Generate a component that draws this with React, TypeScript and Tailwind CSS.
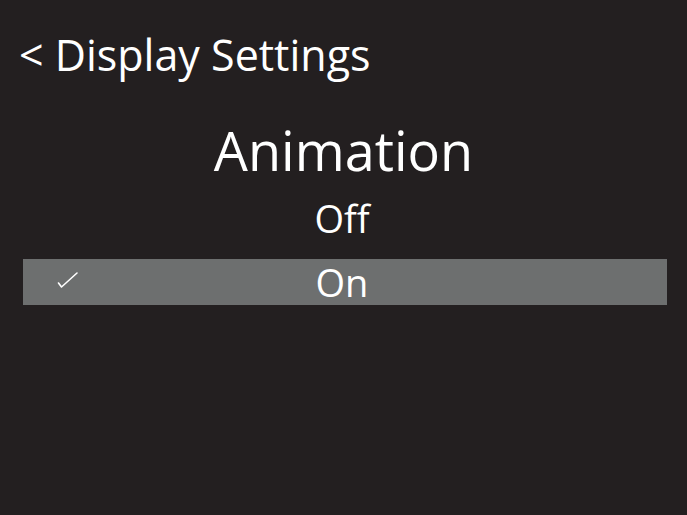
export default function App() {
  return (
    <div
      className="w-[687px] h-[515px] bg-[#231f20] text-white overflow-hidden"
      style={{ fontFamily: '"Open Sans", "Noto Sans", sans-serif' }}
    >
      {/* HEADER */}
      <div className="pl-[19px] pt-[26px] text-[43px] leading-[58px]">&lt; Display Settings</div>

      {/* TITLE */}
      <div className="mt-[34px] text-center text-[54px] leading-[64px]">Animation</div>

      {/* OPTIONS */}
      <div className="mt-[13px] flex flex-col gap-[18px] pl-[23px] pr-[20px]">
        <div className="h-[46px] flex items-center justify-center text-[38px] leading-[46px] pr-[6px]">Off</div>
        <div className="relative h-[46px] bg-[#6d6f6f] flex items-center justify-center text-[38px] leading-[46px] pr-[6px]">
          <svg className="absolute left-[34px] top-[12px]" width="22" height="18" viewBox="0 0 22 18">
            <path d="M1.5 12 L4.5 16 L20 2" fill="none" stroke="#ffffff" strokeWidth="1.6" strokeLinecap="round" strokeLinejoin="round" />
          </svg>
          On
        </div>
      </div>
    </div>
  )
}
